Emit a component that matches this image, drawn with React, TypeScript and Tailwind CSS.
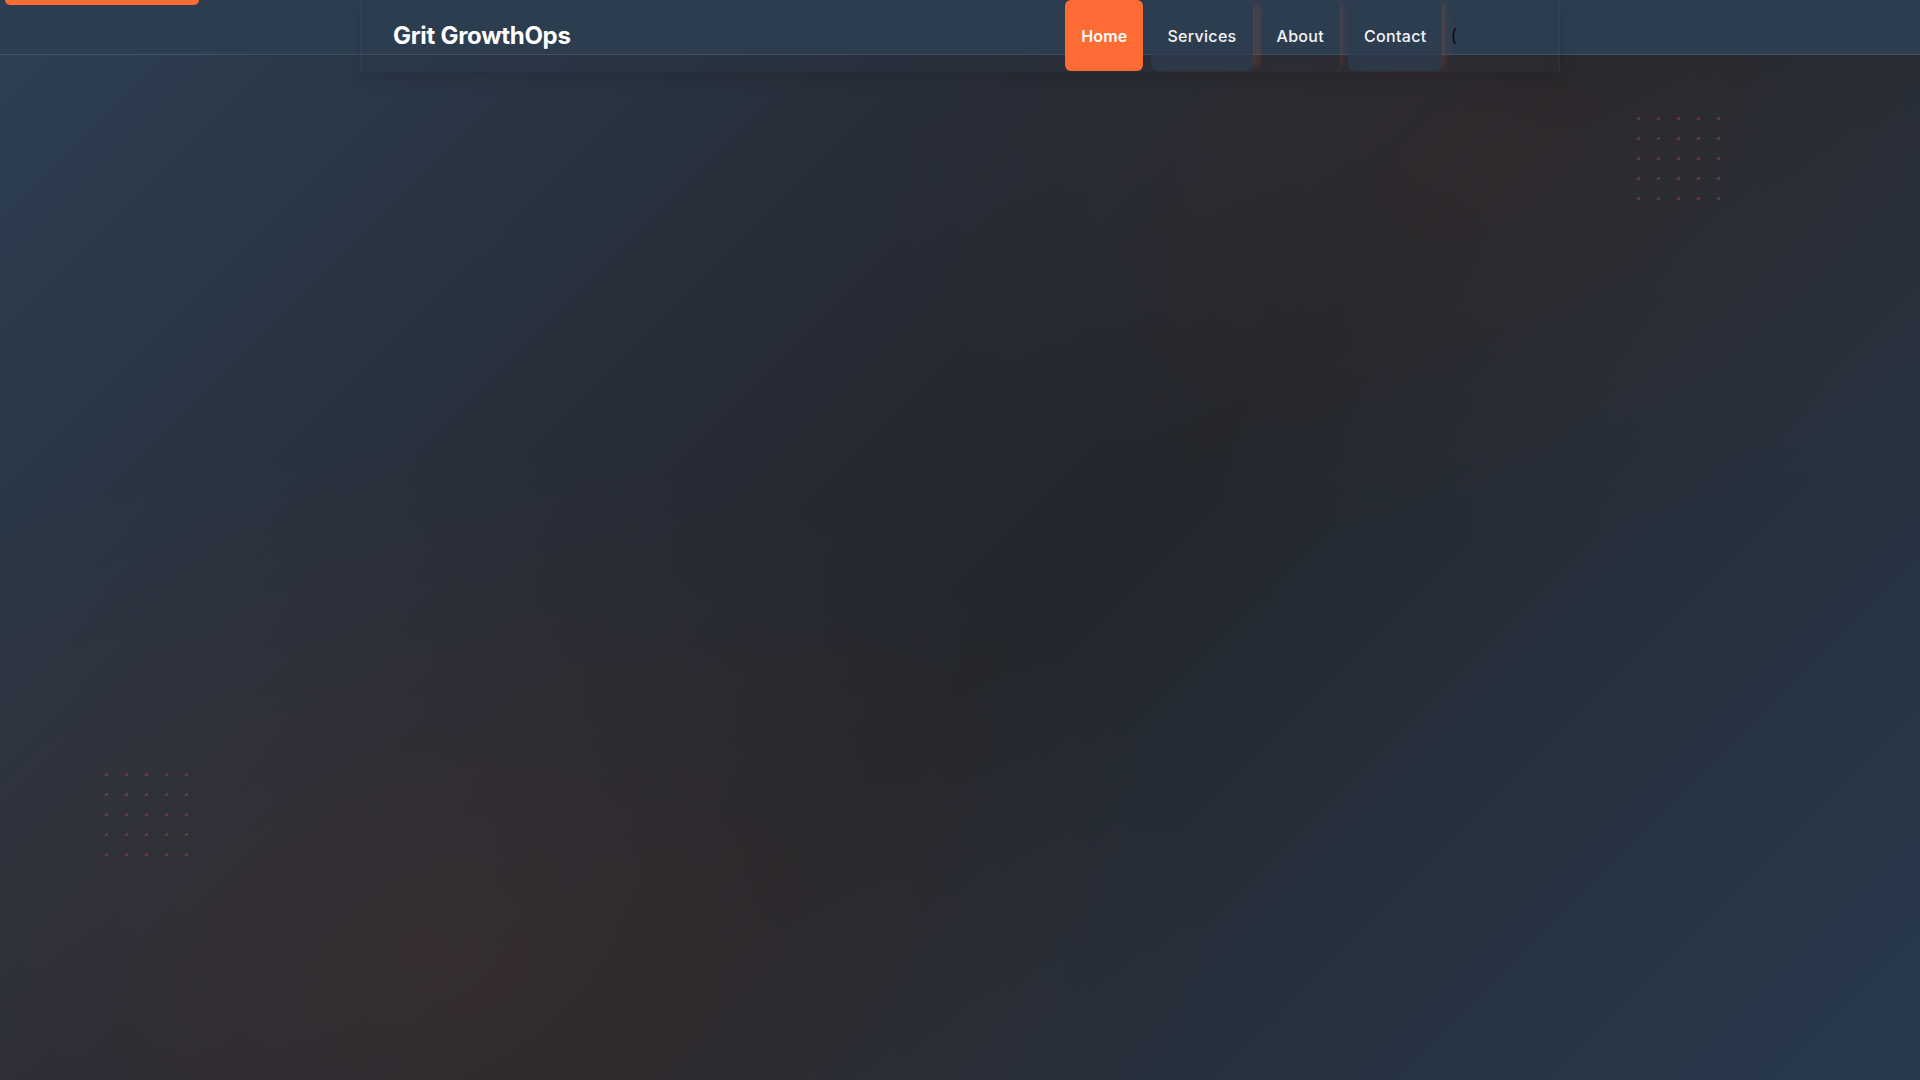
import React from 'react';

const navItems = [
  { label: 'Home', active: true, boxed: true },
  { label: 'Services', active: false, boxed: true },
  { label: 'About', active: false, boxed: false },
  { label: 'Contact', active: false, boxed: true },
];

function DotGrid({ className }: { className: string }) {
  return (
    <div className={`absolute grid grid-cols-5 gap-[17px] ${className}`}>
      {Array.from({ length: 25 }).map((_, i) => (
        <span key={i} className="block h-[3px] w-[3px] rounded-full bg-[#ff6b35]/30" />
      ))}
    </div>
  );
}

export default function App() {
  return (
    <main
      className="relative h-[1080px] w-full overflow-hidden font-['Inter',sans-serif] text-white bg-[radial-gradient(ellipse_at_22%_88%,rgba(255,107,53,0.08),transparent_38%),radial-gradient(ellipse_at_78%_15%,rgba(255,107,53,0.05),transparent_30%),linear-gradient(135deg,#2d4054_0%,#262b35_38%,#23262c_55%,#26303d_75%,#283a4e_100%)]"
    >
      <a
        href="#main"
        className="absolute left-[5px] top-0 z-50 block h-[5px] w-[194px] rounded-b-md bg-[#ff6b35]"
      />

      {/* decorative dots */}
      <DotGrid className="left-[1637px] top-[117px]" />
      <DotGrid className="left-[105px] top-[773px]" />

      {/* header */}
      <header className="relative z-10 h-[55px] w-full border-b border-white/10 bg-[#2d3e51]">
        <div className="mx-auto flex h-[72px] w-[1200px] items-center justify-between border-x border-white/[0.03] bg-[#2d3e51]/10 px-8 shadow-[0_6px_16px_rgba(0,0,0,0.12)]">
          <span className="text-[24px] font-bold tracking-[-0.3px] text-white">Grit GrowthOps</span>
          <nav className="flex h-[71px] items-stretch gap-2 self-start pr-[70px]">
            {navItems.map((item) => (
              <a
                key={item.label}
                href="#"
                className={
                  item.active
                    ? 'flex items-center rounded-md bg-[#ff6b35] px-[16px] text-[16px] font-semibold tracking-[0.2px] text-white'
                    : item.boxed
                      ? 'flex items-center rounded-md bg-[#2e3d50]/70 px-[16px] text-[16px] font-medium tracking-[0.3px] text-gray-100 shadow-[5px_0_8px_-4px_rgba(255,107,53,0.3)]'
                      : 'flex items-center rounded-md px-[16px] text-[16px] font-medium tracking-[0.3px] text-gray-100 shadow-[5px_0_8px_-5px_rgba(255,107,53,0.3),-5px_0_8px_-5px_rgba(255,107,53,0.25)]'
                }
              >
                {item.label}
              </a>
            ))}
            <span className="flex items-center text-[18px] text-black/80">(</span>
          </nav>
        </div>
      </header>
    </main>
  );
}
